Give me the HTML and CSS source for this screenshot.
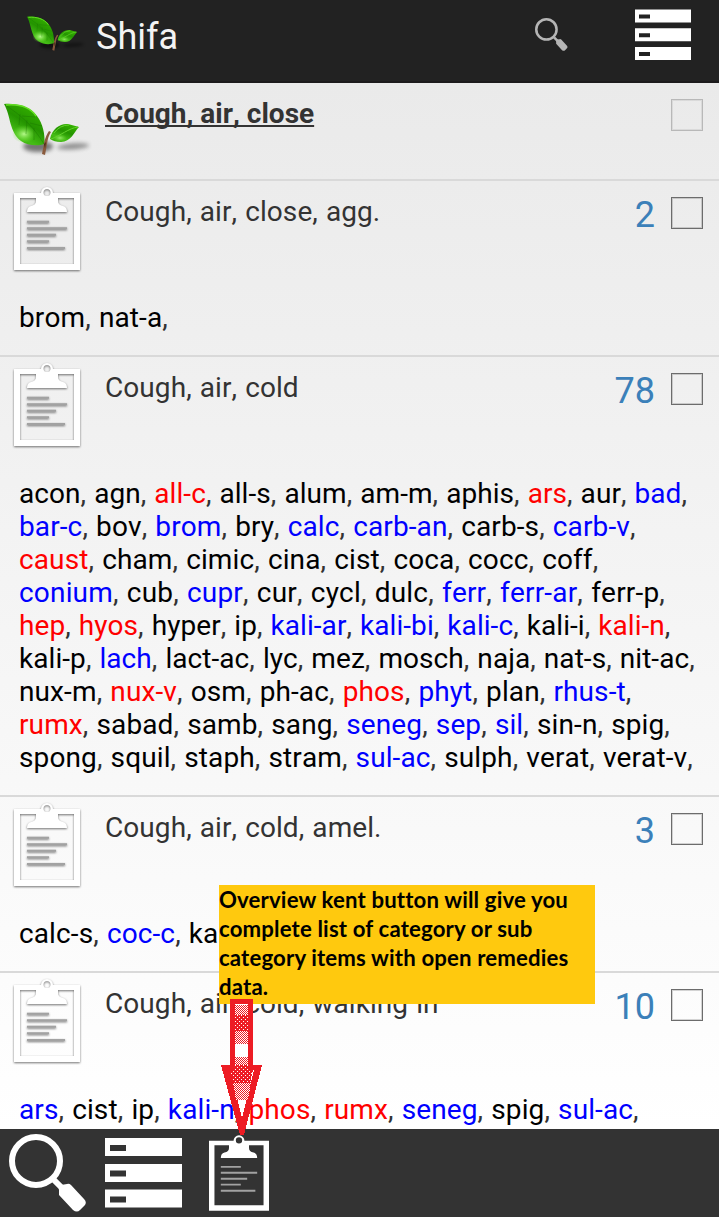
FILE: index.html
```html
<!DOCTYPE html>
<html lang="en">
<head>
<meta charset="utf-8">
<title>Shifa</title>
<link rel="stylesheet" href="styles.css">
</head>
<body>
<svg class="defs" width="0" height="0" aria-hidden="true">
  <defs>
    <linearGradient id="leafFill" x1="0.8" y1="0" x2="0.2" y2="1">
      <stop offset="0" stop-color="#38b800"/><stop offset="0.45" stop-color="#249400"/><stop offset="0.75" stop-color="#45bd16"/><stop offset="1" stop-color="#3aae0c"/>
    </linearGradient>
    <radialGradient id="leafGlow"><stop offset="0" stop-color="#b4f98a"/><stop offset="1" stop-color="#6ee030" stop-opacity="0"/></radialGradient>
    <filter id="soft" x="-30%" y="-60%" width="160%" height="220%"><feGaussianBlur stdDeviation="2"/></filter>
    <pattern id="dense" width="4" height="4" patternUnits="userSpaceOnUse"><rect width="4" height="4" fill="#ed1c24"/><path d="M0 0h1v1H0zM2 2h1v1H2z" fill="#fff"/></pattern>
    <pattern id="checker" width="2" height="2" patternUnits="userSpaceOnUse"><rect width="2" height="2" fill="#fff"/><path d="M0 0h1v1H0zM1 1h1v1H1z" fill="#ed1c24"/></pattern>
    <symbol id="leaf" viewBox="0 0 92 60">
      <ellipse cx="38" cy="46.5" rx="15" ry="5.5" fill="#000" opacity=".5" filter="url(#soft)"/>
      <ellipse cx="73" cy="46.5" rx="16" ry="3" fill="#000" opacity=".4" filter="url(#soft)" transform="rotate(-4 71 46)"/>
      <path d="M4 4C16 3 30 6 37 16C43 24 45 34 44.500 44C38 46 28 46 21 41C9 32 11 16 4 4Z" fill="url(#leafFill)"/>
      <ellipse cx="24" cy="34" rx="12" ry="9" fill="url(#leafGlow)"/>
      <path d="M5 5C21 15 34 27 44 44M20 14L19 25M27 20L26 34M34 28L34 40M22 16L35 17M30 23L42 26" fill="none" stroke="#176d00" stroke-width=".7" opacity=".5"/>
      <path d="M6 5C18 4 30 7 36 16" fill="none" stroke="#65e025" stroke-width="1.4"/>
      <path d="M50 39C52 28 61 23 68 24L79 27C74 32 71 42 61 42C56 42 53 41 50 39Z" fill="url(#leafFill)"/>
      <ellipse cx="60" cy="38" rx="7" ry="4" fill="url(#leafGlow)" opacity=".7"/>
      <path d="M51 39C60 36 69 28 78 27M54 33Q60 25 69 25" fill="none" stroke="#62d12c" stroke-width="1"/>
      <path d="M49 31L51 32Q48 36 47 44L45 55L42 54L44 43Q46 35 49 31Z" fill="#8a5a3c"/>
      <path d="M44 44L46 42L45 49Z" fill="#4b2c1c"/>
    </symbol>
    <symbol id="search" viewBox="0 0 78 78">
      <circle cx="27" cy="27" r="24" fill="none" stroke="currentColor" stroke-width="6"/>
      <path d="M45 46L55 56" stroke="currentColor" stroke-width="6"/>
      <path d="M50 56Q49 53 52 51L58 50Q60 49 62 51L75 65Q78 68 76 71L71 76Q68 79 64 76L50 61Z" fill="currentColor"/>
    </symbol>
    <symbol id="clip" viewBox="0 0 66 84">
      <path fill-rule="evenodd" d="M0 6H27A6 6 0 0 1 39 6H66V83H0ZM6 11V77H60V11H44V14Q44 18 49 19Q53 20 53 25H13Q13 20 17 19Q22 18 22 14V11ZM33 2A3.500 3.500 0 0 0 33 9A3.500 3.500 0 0 0 33 2Z"/>
      <g class="clip-lines"><path d="M13 34.700H35M13 41.200H53M13 47.800H42M13 54.300H35M13 61H51"/></g>
    </symbol>
  </defs>
</svg>
<div class="screen">
  <header class="topbar">
    <svg class="brand-leaf"><use href="#leaf"/></svg>
    <h1 class="brand">Shifa</h1>
    <svg class="top-search"><use href="#search"/></svg>
    <svg class="top-list" viewBox="0 0 56 51"><path fill-rule="evenodd" d="M0 .5H56V13.500H0ZM4 5.500V9.500H15V5.500ZM0 19.300H56V32.300H0ZM4 24.300V28.300H15V24.300ZM0 38H56V51H0ZM4 43V47H15V43Z" fill="#fff"/></svg>
  </header>

  <main class="list">
    <section class="row head-row">
      <svg class="row-leaf"><use href="#leaf"/></svg>
      <h2 class="title current">Cough, air, close</h2>
      <span class="check faint"></span>
    </section>

    <section class="row">
      <svg class="row-clip"><use href="#clip"/></svg>
      <h2 class="title">Cough, air, close, agg.</h2>
      <span class="count">2</span><span class="check"></span>
      <div class="remedies"><p><i>brom</i>, <i>nat-a</i>,</p></div>
    </section>

    <section class="row">
      <svg class="row-clip"><use href="#clip"/></svg>
      <h2 class="title">Cough, air, cold</h2>
      <span class="count">78</span><span class="check"></span>
      <div class="remedies">
        <p class="snug"><i>acon</i>, <i>agn</i>, <b>all-c</b>, <i>all-s</i>, <i>alum</i>, <i>am-m</i>, <i>aphis</i>, <b>ars</b>, <i>aur</i>, <em>bad</em>,</p>
        <p><em>bar-c</em>, <i>bov</i>, <em>brom</em>, <i>bry</i>, <em>calc</em>, <em>carb-an</em>, <i>carb-s</i>, <em>carb-v</em>,</p>
        <p><b>caust</b>, <i>cham</i>, <i>cimic</i>, <i>cina</i>, <i>cist</i>, <i>coca</i>, <i>cocc</i>, <i>coff</i>,</p>
        <p class="wide"><em>conium</em>, <i>cub</i>, <em>cupr</em>, <i>cur</i>, <i>cycl</i>, <i>dulc</i>, <em>ferr</em>, <em>ferr-ar</em>, <i>ferr-p</i>,</p>
        <p class="snug"><b>hep</b>, <b>hyos</b>, <i>hyper</i>, <i>ip</i>, <em>kali-ar</em>, <em>kali-bi</em>, <em>kali-c</em>, <i>kali-i</i>, <b>kali-n</b>,</p>
        <p class="snug"><i>kali-p</i>, <em>lach</em>, <i>lact-ac</i>, <i>lyc</i>, <i>mez</i>, <i>mosch</i>, <i>naja</i>, <i>nat-s</i>, <i>nit-ac</i>,</p>
        <p><i>nux-m</i>, <b>nux-v</b>, <i>osm</i>, <i>ph-ac</i>, <b>phos</b>, <em>phyt</em>, <i>plan</i>, <em>rhus-t</em>,</p>
        <p><b>rumx</b>, <i>sabad</i>, <i>samb</i>, <i>sang</i>, <em>seneg</em>, <em>sep</em>, <em>sil</em>, <i>sin-n</i>, <i>spig</i>,</p>
        <p><i>spong</i>, <i>squil</i>, <i>staph</i>, <i>stram</i>, <em>sul-ac</em>, <i>sulph</i>, <i>verat</i>, <i>verat-v</i>,</p>
      </div>
    </section>

    <section class="row">
      <svg class="row-clip"><use href="#clip"/></svg>
      <h2 class="title">Cough, air, cold, amel.</h2>
      <span class="count">3</span><span class="check"></span>
      <div class="remedies"><p><i>calc-s</i>, <em>coc-c</em>, <i>ka</i></p></div>
    </section>

    <section class="row last">
      <svg class="row-clip"><use href="#clip"/></svg>
      <h2 class="title">Cough, air, cold, walking in</h2>
      <span class="count">10</span><span class="check"></span>
      <div class="remedies"><p><em>ars</em>, <i>cist</i>, <i>ip</i>, <em>kali-n</em>, <b>phos</b>, <b>rumx</b>, <em>seneg</em>, <i>spig</i>, <em>sul-ac</em>,</p></div>
    </section>
  </main>

  <footer class="toolbar">
    <svg class="tool-search"><use href="#search"/></svg>
    <svg class="tool-list" viewBox="0 0 77 70"><path fill-rule="evenodd" d="M0 0H77V18H0ZM5 7V13H21V7ZM0 26H77V44H0ZM5 32.500V38.500H21V32.500ZM0 51.500H77V69.500H0ZM5 58.500V64.500H21V58.500Z" fill="#fff"/></svg>
    <svg class="tool-clip"><use href="#clip"/></svg>
  </footer>

  <div class="note">Overview kent button will give you<br>complete list of category or sub<br>category items with open remedies<br>data.</div>
  <svg class="arrow" viewBox="0 0 42 137" shape-rendering="crispEdges">
    <path d="M9 0H32V66H41L23 136H19L0 66H9Z" fill="#ed1c24"/>
    <path d="M14 5H27V71H33L21 119L9 71H14Z" fill="#fff"/>
    <path d="M14 6H27V16H14ZM14 32H27V45H14ZM14 58H27V66H14ZM12 83H30L27 101H15Z" fill="url(#checker)"/>
    <path d="M14 16H27V32H14ZM14 66H27V71H32L29 84H12L9 71H14Z" fill="url(#dense)"/>
  </svg>
</div>
</body>
</html>
```
FILE: styles.css
```css
* { box-sizing: border-box; margin: 0; padding: 0; }
body { background: #fff; font-family: Roboto, "Liberation Sans", sans-serif; font-kerning: none; }
svg { display: block; }
.defs { position: absolute; }
.screen {
  position: relative;
  width: 719px;
  height: 1217px;
  overflow: hidden;
  background: linear-gradient(#eaeaea 83px, #ffffff 1129px);
}
.topbar {
  display: flex;
  align-items: flex-start;
  height: 83px;
  padding: 9px 28px 0 24px;
  background: #222;
  border-bottom: 2px solid #1c1b1c;
}
.brand-leaf { width: 62px; height: 40px; margin-top: 5px; }
.brand {
  margin-left: 10px;
  font-size: 36px;
  line-height: 42px;
  font-weight: 400;
  color: #f3f3f3;
  margin-top: 7px;
}
.top-search { width: 33px; height: 33px; margin: 9px 67px 0 auto; color: #b5b5b5; }
.top-list { width: 56px; height: 51px; }

.row {
  display: grid;
  grid-template-columns: 105px 1fr auto 32px;
  grid-template-rows: 120px auto;
  align-items: start;
  padding: 0 16px 21px 0;
  border-bottom: 2px solid #d9d9d9;
}
.head-row { grid-template-rows: 96px; padding-bottom: 0; }
.last { border-bottom: 0; height: 156px; overflow: hidden; padding-bottom: 0; }
.title {
  grid-column: 2;
  margin-top: 14px;
  font-size: 28px;
  line-height: 33px;
  font-weight: 400;
  letter-spacing: .08px;
  word-spacing: 1px;
  color: #333;
  white-space: nowrap;
}
.current {
  font-weight: 700;
  letter-spacing: 0;
  word-spacing: 0;
  text-decoration: underline;
  text-decoration-thickness: 2px;
  text-underline-offset: 2px;
  text-decoration-skip-ink: none;
}
.row-leaf { width: 92px; height: 60px; margin-top: 17px; }
.row-clip {
  width: 66px;
  height: 84px;
  margin: 6px 0 0 14px;
  fill: #fff;
  overflow: visible;
  filter: drop-shadow(0 1px 1px rgba(0, 0, 0, .55));
}
.clip-lines { fill: none; stroke: #a2a2a2; stroke-width: 2; }
.count { grid-column: 3; margin: 13px 16px 0 0; font-size: 36px; line-height: 42px; color: #3b80b9; }
.check {
  grid-column: 4;
  width: 32px;
  height: 32px;
  margin-top: 16px;
  border: 1px solid #6c6c6c;
  box-shadow: inset 0 0 0 1px rgba(0, 0, 0, .16);
}
.faint { border-color: #b8b8b8; box-shadow: inset 0 0 0 1px rgba(0, 0, 0, .07); }
.remedies {
  grid-column: 1 / -1;
  padding-left: 19px;
  font-size: 28px;
  line-height: 33px;
  letter-spacing: .11px;
  word-spacing: 1px;
  color: #333;
  white-space: nowrap;
}
.remedies .wide { letter-spacing: .18px; }
.remedies .snug { letter-spacing: .06px; }
.remedies i, .remedies b, .remedies em { font-style: normal; font-weight: 400; }
.remedies i { color: #000; }
.remedies b { color: #f00; }
.remedies em { color: #00f; }

.toolbar { display: flex; align-items: flex-start; height: 88px; padding: 5px 0 0 9px; background: #333; }
.tool-search { width: 78px; height: 78px; color: #fff; }
.tool-list { width: 77px; height: 70px; margin: 4px 0 0 18px; }
.tool-clip { width: 60px; height: 77px; margin: 1px 0 0 27px; fill: #fff; }

.note {
  position: absolute;
  left: 219px;
  top: 885px;
  width: 376px;
  height: 119px;
  background: #ffc90e;
  color: #000;
  font: 700 22.200px/29px Lato, "Open Sans", sans-serif;
  font-kerning: normal;
  letter-spacing: .15px;
  white-space: nowrap;
}
.arrow { position: absolute; left: 221px; top: 999px; width: 42px; height: 137px; }
```
